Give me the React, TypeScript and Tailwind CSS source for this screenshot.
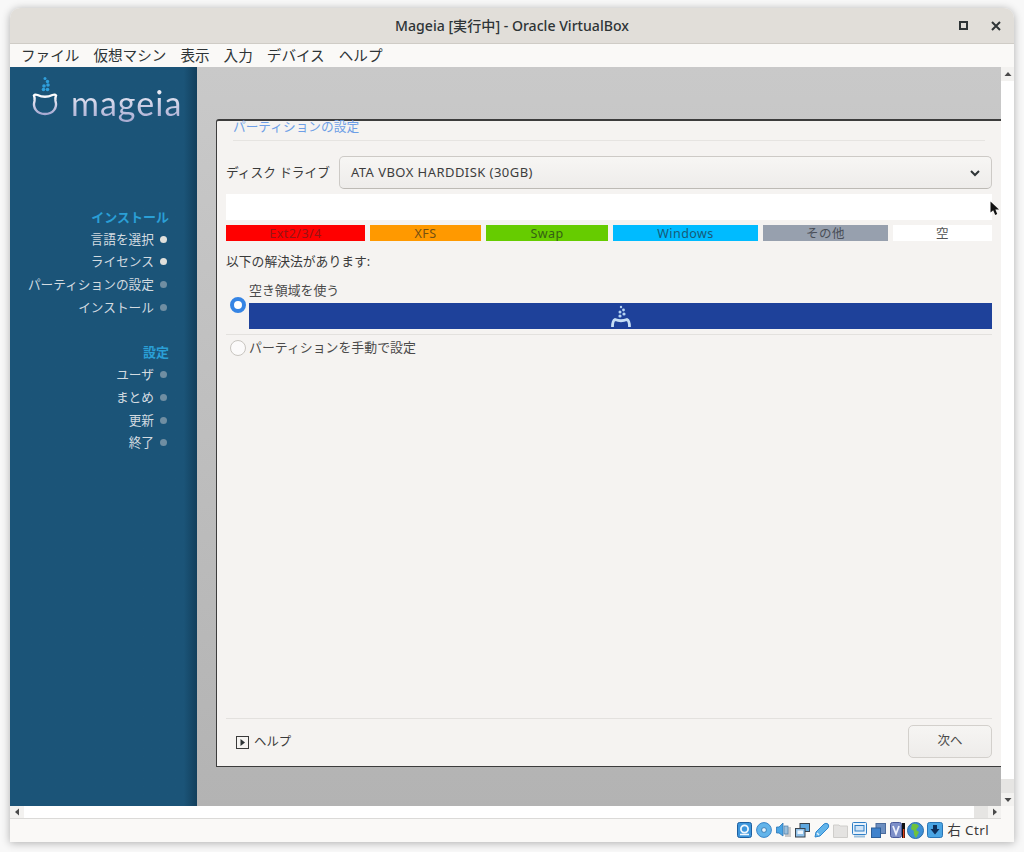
import React from 'react';

const jp = 'font-["Noto_Sans","Noto_Sans_CJK_JP",sans-serif]';

const menuItems = ['ファイル', '仮想マシン', '表示', '入力', 'デバイス', 'ヘルプ'];

const sections: Array<{ title: string | null; steps: Array<{ label: string; done: boolean }> }> = [
  {
    title: 'インストール',
    steps: [
      { label: '言語を選択', done: true },
      { label: 'ライセンス', done: true },
      { label: 'パーティションの設定', done: false },
      { label: 'インストール', done: false },
    ],
  },
  {
    title: '設定',
    steps: [
      { label: 'ユーザ', done: false },
      { label: 'まとめ', done: false },
      { label: '更新', done: false },
      { label: '終了', done: false },
    ],
  },
];

const legend = [
  { label: 'Ext2/3/4', cls: 'w-[139px] bg-[#ff0000] text-[#981414]' },
  { label: 'XFS', cls: 'w-[111px] bg-[#ff9900] text-[#755012]' },
  { label: 'Swap', cls: 'w-[122px] bg-[#66cc00] text-[#356014]' },
  { label: 'Windows', cls: 'w-[145px] bg-[#00bbff] text-[#175a78]' },
  { label: 'その他', cls: 'w-[125px] bg-[#97a0ae] text-[#4a4f58]' },
  { label: '空', cls: 'flex-1 bg-white text-[#555]' },
];

const Logo = () => (
  <div className="flex items-end h-[52px] ml-[21px]">
    <svg width="28" height="44" viewBox="0 0 28 44" className="shrink-0">
      <defs>
        <linearGradient id="flaskGrad" x1="0" y1="0" x2="0" y2="1">
          <stop offset="0" stopColor="#ffffff" />
          <stop offset="1" stopColor="#a7a9d2" />
        </linearGradient>
      </defs>
      <g fill="#2f9fdc">
        <circle cx="14" cy="3.5" r="1.5" />
        <circle cx="16.5" cy="6.5" r="1.7" />
        <circle cx="17" cy="10" r="1.8" />
        <circle cx="13" cy="11" r="1.8" />
        <circle cx="12.5" cy="14.5" r="1.8" />
        <circle cx="16.5" cy="14.5" r="1.8" />
      </g>
      <path
        d="M3 20.5 Q4 19 6.5 20 Q14 23.5 21.5 20 Q24 19 25 20.5 Q24 23 24.5 26 C26.5 33 22 39 14 39 C6 39 1.5 33 3.5 26 Q4 23 3 20.5 Z"
        fill="none"
        stroke="url(#flaskGrad)"
        strokeWidth="2.4"
      />
    </svg>
    <span className="ml-[12px] mb-[-4px] bg-gradient-to-b from-white to-[#a5a8d0] bg-clip-text text-transparent font-['Lato',sans-serif] font-normal text-[34px] leading-[40px] tracking-[1px]">
      mageia
    </span>
  </div>
);

const Sidebar = () => (
  <div className="w-[187px] shrink-0 bg-[#1b5478] bg-gradient-to-r from-[#1b5478] from-[93%] to-[#123f5c] flex flex-col">
    <Logo />
    <div className="mt-[86.5px] flex flex-col gap-[22.6px]">
      {sections.map((section) => (
        <div key={section.title} className="flex flex-col">
          <div className="h-[22.6px] leading-[22.6px] text-right pr-[28px] text-[13px] font-bold text-[#2a9fd6]">
            {section.title}
          </div>
          {section.steps.map((step) => (
            <div key={step.label} className="h-[22.6px] flex items-center justify-end pr-[30px]">
              <span className="text-[12.7px] text-[#d3dbe0] whitespace-nowrap">{step.label}</span>
              <span
                className={`ml-[6px] w-[7px] h-[7px] rounded-full ${step.done ? 'bg-[#e0e0dc]' : 'bg-[#708ea2]'}`}
              />
            </div>
          ))}
        </div>
      ))}
    </div>
  </div>
);

const Radio = ({ checked }: { checked?: boolean }) =>
  checked ? (
    <span className="w-[16px] h-[16px] rounded-full border-[4px] border-[#3584e4] bg-white shrink-0" />
  ) : (
    <span className="w-[16px] h-[16px] rounded-full border border-[#c8c5c0] bg-[#fbfafa] shrink-0" />
  );

const Dialog = () => (
  <div className="flex-1 min-h-0 relative bg-[#f5f3f1] border-l border-t-2 border-b border-[#3c3c3c] rounded-tl-[3px] flex flex-col px-[9px]">
    <div className="ml-[7px] mr-[7px] h-[20px] border-b border-[#e6e4e1]">
      <div className="text-[12.7px] leading-[14px] text-[#6e9fe6] mt-[-2px]">パーティションの設定</div>
    </div>
    <div className="mt-[15px] flex items-center h-[33px]">
      <span className="w-[113px] text-[12.7px] text-[#3a3a3a] whitespace-pre pt-[1px]">ディスク ドライブ</span>
      <div className="flex-1 h-full rounded-[5px] border border-[#cdcac6] border-b-[#bdbab5] bg-gradient-to-b from-[#f7f6f4] to-[#eeecea] flex items-center justify-between pl-[11px] pr-[9px]">
        <span className="text-[13px] text-[#3d3d3d] tracking-[0.45px]">ATA VBOX HARDDISK (30GB)</span>
        <svg width="12" height="12" viewBox="0 0 12 12" className="mr-[1px]">
          <path d="M2 4 L6 8 L10 4" fill="none" stroke="#2e3436" strokeWidth="2" />
        </svg>
      </div>
    </div>
    <div className="mt-[5px] h-[26px] bg-white" />
    <div className="mt-[5px] h-[16px] flex gap-[5px]">
      {legend.map((item) => (
        <div key={item.label} className={`${item.cls} text-[12.5px] leading-[17px] text-center tracking-[0.45px]`}>
          {item.label}
        </div>
      ))}
    </div>
    <div className="mt-[12px] text-[12.8px] leading-[16px] text-[#3a3a3a]">以下の解決法があります:</div>
    <div className="mt-[14px] flex items-center pb-[5px] border-b border-[#e3e1de]">
      <div className="w-[23px] flex pl-[4px] pb-[2px]">
        <Radio checked />
      </div>
      <div className="flex-1">
        <div className="text-[12.9px] leading-[14px] text-[#4a4a4a]">空き領域を使う</div>
        <div className="mt-[6px] h-[26px] bg-[#1e419a] flex items-center justify-center">
          <svg width="24" height="24" viewBox="0 0 24 24">
            <g fill="#b5d3f2">
              <circle cx="12" cy="3" r="1.2" />
              <circle cx="14.5" cy="6" r="1.4" />
              <circle cx="11" cy="8" r="1.5" />
              <circle cx="15" cy="10" r="1.6" />
              <circle cx="11" cy="12" r="1.6" />
            </g>
            <path
              d="M3.5 23 Q3.5 16.5 6 15.5 Q12 18 18 15.5 Q20.5 16.5 20.5 23"
              fill="none"
              stroke="#c6def5"
              strokeWidth="2.8"
            />
          </svg>
        </div>
      </div>
    </div>
    <div className="mt-[4px] flex items-center h-[17px]">
      <div className="w-[23px] flex pl-[4px]">
        <Radio />
      </div>
      <span className="text-[12.9px] text-[#4a4a4a]">パーティションを手動で設定</span>
    </div>
    <div className="mt-auto h-[48px] border-t border-[#e3e1de] flex items-start justify-between pt-[6px]">
      <div className="flex items-center ml-[10px] mt-[8px] gap-[5px]">
        <svg width="13" height="13" viewBox="0 0 13 13">
          <rect x="0.5" y="0.5" width="12" height="12" fill="#f5f3f1" stroke="#3a3a3a" />
          <path d="M4.5 3 L9 6.5 L4.5 10 Z" fill="#2e3436" />
        </svg>
        <span className="text-[12.4px] text-[#3a3a3a]">ヘルプ</span>
      </div>
      <div className="w-[84px] h-[33px] rounded-[5px] border border-[#d3d0cc] bg-gradient-to-b from-[#f6f5f3] to-[#eeecea] flex items-center justify-center text-[12.5px] text-[#4a4a4a]">
        次へ
      </div>
    </div>
    {/* mouse pointer from the guest */}
    <svg width="11" height="16" viewBox="0 0 11 16" className="absolute left-[773px] top-[80px]">
      <path d="M0.5 0.5 L0.5 11.5 L3.2 9.2 L5.2 14 L7.2 13 L5.4 8.6 L9 8.6 Z" fill="#111" />
    </svg>
  </div>
);

const ScrollArrow = ({ d, cls }: { d: string; cls: string }) => (
  <div className={`bg-[#f3f2f0] flex items-center justify-center ${cls}`}>
    <svg width="8" height="8" viewBox="0 0 8 8">
      <path d={d} fill="#4a4a4a" />
    </svg>
  </div>
);

const StatusIcons = () => (
  <div className="flex items-center">
    {/* hard disk */}
    <svg width="15" height="16" viewBox="0 0 15 16" className="ml-0">
      <rect x="0.5" y="0.5" width="14" height="15" rx="2" fill="#3d96dc" stroke="#1d5f9f" />
      <circle cx="7.5" cy="7" r="3.6" fill="none" stroke="#eef6fd" strokeWidth="1.8" />
      <path d="M3 12.5 H12" stroke="#eef6fd" strokeWidth="1.6" />
    </svg>
    {/* optical disc */}
    <svg width="16" height="16" viewBox="0 0 16 16" className="ml-[4px]">
      <circle cx="8" cy="8" r="7.4" fill="#62b4ea" stroke="#3a86c8" />
      <circle cx="8" cy="8" r="2.4" fill="#e6f4fd" stroke="#2a6da8" strokeWidth="0.8" />
    </svg>
    {/* audio */}
    <svg width="15" height="16" viewBox="0 0 15 16" className="ml-[4px]">
      <rect x="9" y="5" width="6" height="10" fill="#c9c9c9" />
      <path d="M0.5 5 H3 L7 1 V14 L3 11 H0.5 Z" fill="#4aa5e4" stroke="#2a75b5" strokeWidth="0.8" />
      <rect x="8" y="4" width="4" height="8" fill="#9cc0dc" stroke="#4f7fa8" strokeWidth="0.7" />
    </svg>
    {/* network */}
    <svg width="15" height="15" viewBox="0 0 15 15" className="ml-[4px]">
      <rect x="5" y="0.5" width="9.5" height="8" fill="#5fa8e0" stroke="#39434d" />
      <rect x="0.5" y="5.5" width="9.5" height="8.5" fill="#8fc0e8" stroke="#39434d" />
      <rect x="2.5" y="7.5" width="5.5" height="3.5" fill="#eef6fd" />
    </svg>
    {/* usb */}
    <svg width="16" height="16" viewBox="0 0 16 16" className="ml-[4px]">
      <path d="M1 15 L2 10 L10 2 Q12 0.5 14 2 Q15.5 4 14 6 L6 14 Z" fill="#62b4ea" stroke="#2f86cc" />
      <path d="M3 11 L5 13" stroke="#e6f4fd" strokeWidth="1.4" />
    </svg>
    {/* shared folders, off */}
    <svg width="15" height="15" viewBox="0 0 15 15" className="ml-[3px]">
      <path d="M0.5 2 H6 L7 3 H14.5 V14.5 H0.5 Z" fill="#e4e3e1" stroke="#cfcecb" />
    </svg>
    {/* display */}
    <svg width="15" height="16" viewBox="0 0 15 16" className="ml-[4px]">
      <rect x="0.5" y="0.5" width="14" height="12" rx="1" fill="#e8f2fb" stroke="#2f7fc6" />
      <rect x="3" y="3.5" width="9" height="5.5" fill="#cfe3f6" stroke="#2f7fc6" />
      <rect x="2" y="13.5" width="11" height="2" fill="#9cc0dc" />
    </svg>
    {/* capture */}
    <svg width="15" height="15" viewBox="0 0 15 15" className="ml-[4px]">
      <rect x="5" y="0.5" width="9.5" height="10" fill="#6d8fc0" stroke="#4c6c9c" />
      <rect x="0.5" y="5" width="9" height="9.5" fill="#3f82cc" stroke="#2c5f9a" />
    </svg>
    {/* vm state */}
    <svg width="15" height="16" viewBox="0 0 15 16" className="ml-[4px]">
      <rect x="0.5" y="0.5" width="11" height="15" rx="2" fill="#7d8fc8" stroke="#4a5a9a" />
      <path d="M3 4 L6 12 L9 4" fill="none" stroke="#eef0fa" strokeWidth="1.8" />
      <rect x="12" y="1" width="3" height="15" fill="#111" />
      <rect x="13" y="7" width="1.4" height="9" fill="#e2401a" />
    </svg>
    {/* globe */}
    <svg width="17" height="17" viewBox="0 0 17 17" className="ml-[2px]">
      <circle cx="8.5" cy="8.5" r="8" fill="#3d8fd6" stroke="#2a6da8" />
      <path d="M5 2 Q10 1 12 4 L9 8 L12 10 L9 16 Q6 12 7 9 L4 7 Z" fill="#6ec23c" />
    </svg>
    {/* additions */}
    <svg width="16" height="16" viewBox="0 0 16 16" className="ml-[3px]">
      <rect x="0.5" y="0.5" width="15" height="15" rx="2" fill="#4aa5e4" stroke="#2a75b5" />
      <path d="M6 3 H10 V7 H12.5 L8 12.5 L3.5 7 H6 Z" fill="#0f2f5a" />
    </svg>
    <span className="ml-[4px] text-[13.4px] text-[#3a3a3a] tracking-[0.4px] whitespace-pre">右 Ctrl</span>
  </div>
);

export default function App() {
  return (
    <div className={`w-[1024px] h-[852px] overflow-hidden bg-[#f8f8f8] pt-[8px] pl-[10px] ${jp}`}>
      <div className="w-[1004px] h-[834px] flex flex-col rounded-t-[10px] overflow-hidden shadow-[0_1px_8px_rgba(0,0,0,0.3)]">
        {/* title bar */}
        <div className="h-[36px] shrink-0 relative bg-[#e1ded9] border-b border-[#cfccc6] flex items-center justify-center">
          <span className="text-[14.1px] font-medium text-[#2e3436] whitespace-nowrap pt-[1px]">Mageia [実行中] - Oracle VirtualBox</span>
          <svg width="9" height="9" viewBox="0 0 9 9" className="absolute left-[949px] top-[13px]">
            <rect x="1" y="1" width="7" height="7" fill="none" stroke="#2e3436" strokeWidth="2" />
          </svg>
          <svg width="10" height="10" viewBox="0 0 10 10" className="absolute left-[981px] top-[13px]">
            <path d="M1 1 L9 9 M9 1 L1 9" stroke="#2e3436" strokeWidth="2" />
          </svg>
        </div>
        {/* menu bar */}
        <div className="h-[23px] shrink-0 bg-[#faf9f7] flex items-center pl-[11px] gap-[14px] text-[14.6px] text-[#2e3436]">
          {menuItems.map((m) => (
            <span key={m}>{m}</span>
          ))}
        </div>
        {/* guest screen with scrollbars */}
        <div className="h-[739px] shrink-0 flex">
          <div className="w-[991px] flex">
            <Sidebar />
            <div className="flex-1 bg-gradient-to-b from-[#c9c9c9] to-[#b3b3b3] pt-[52px] pb-[39px] pl-[19px] flex flex-col">
              <Dialog />
            </div>
          </div>
          <div className="w-[13px] bg-white flex flex-col justify-between">
            <ScrollArrow d="M4 2 L7.5 6 H0.5 Z" cls="h-[14px]" />
            <div className="flex flex-col">
              <div className="h-[14px] bg-[#e6e5e3]" />
              <ScrollArrow d="M4 6 L7.5 2 H0.5 Z" cls="h-[13px]" />
            </div>
          </div>
        </div>
        {/* horizontal scrollbar */}
        <div className="h-[13px] shrink-0 bg-[#faf9f7] flex">
          <div className="w-[991px] bg-white border-b border-[#dbdad8] flex justify-between">
            <ScrollArrow d="M2 4 L6 0.5 V7.5 Z" cls="w-[14px]" />
            <div className="flex">
              <div className="w-[14px] bg-[#e6e5e3]" />
              <ScrollArrow d="M6 4 L2 0.5 V7.5 Z" cls="w-[13px]" />
            </div>
          </div>
        </div>
        {/* status bar */}
        <div className="flex-1 bg-[#faf9f7] flex items-center justify-end pr-[25px]">
          <StatusIcons />
        </div>
      </div>
    </div>
  );
}
